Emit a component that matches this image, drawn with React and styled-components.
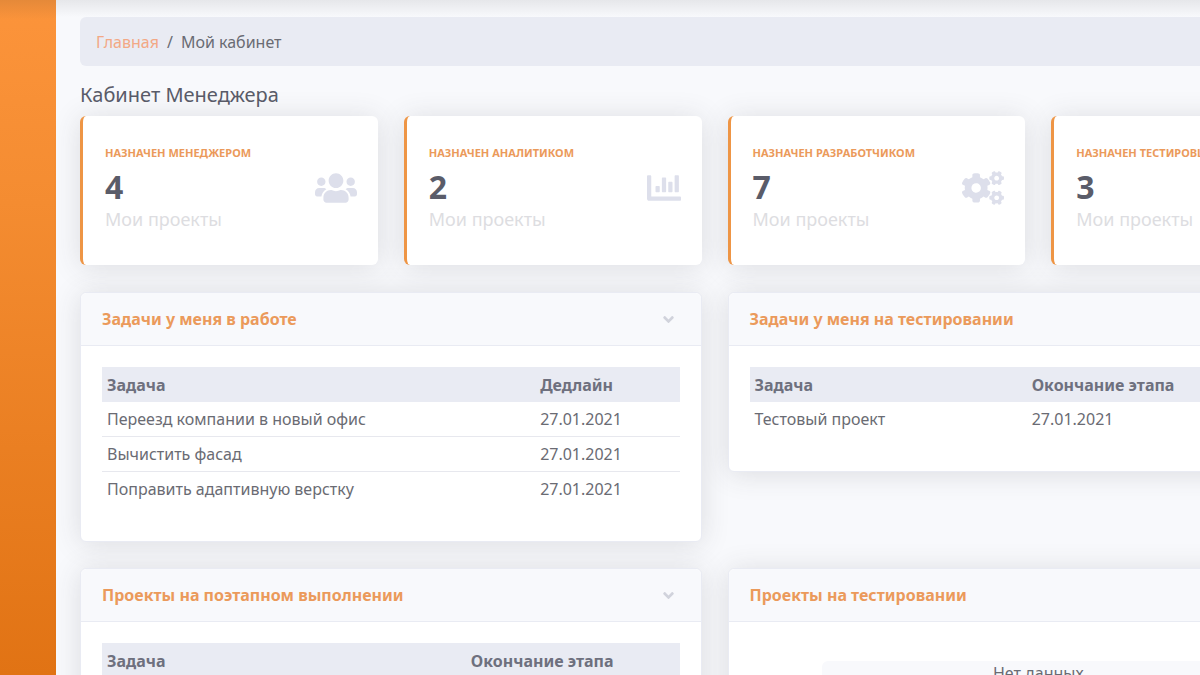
import styled, { createGlobalStyle } from "styled-components";
import {
  FaAngleDown,
  FaChartBar,
  FaCogs,
  FaUsers,
  FaVial,
} from "react-icons/fa";

const GlobalStyle = createGlobalStyle`
  * {
    box-sizing: border-box;
  }

  body {
    margin: 0;
    font-family: "Noto Sans", "Open Sans", sans-serif;
    font-size: 16px;
    line-height: 24px;
    color: #6a6b73;
    background: #f8f9fc;
  }
`;

const Shell = styled.div`
  display: flex;
  height: 100vh;
  overflow: hidden;
`;

const Sidebar = styled.aside`
  flex: 0 0 56px;
  background: linear-gradient(#e58939 0, rgba(253, 147, 58, 0) 20px),
    linear-gradient(#fc943b 0%, #f48c31 30%, #e17314 100%);
`;

const Main = styled.main`
  flex: 1 0 1317px;
  min-width: 0;
  padding: 17px 24px 0;
  background: linear-gradient(#e6e7ea, #f8f9fc 17px);
`;

const Breadcrumb = styled.nav`
  display: flex;
  gap: 8px;
  padding: 13px 16px 12px;
  border-radius: 6px;
  background: #e9ebf3;
`;

const HomeLink = styled.a`
  color: #f3a885;
  text-decoration: none;
`;

const Title = styled.h1`
  margin: 17px 0 9px;
  font-size: 20px;
  font-weight: 400;
  line-height: 24px;
  color: #5a5c69;
`;

const StatRow = styled.section`
  display: grid;
  grid-template-columns: repeat(4, minmax(0, 1fr));
  gap: 26px;
  margin-bottom: 27px;
`;

const StatCard = styled.article`
  display: flex;
  align-items: center;
  justify-content: space-between;
  padding: 25px 21px 36px 22px;
  border-left: 3px solid #ee9545;
  border-radius: 6px;
  background: #fff;
  box-shadow: 0 2px 28px rgba(58, 59, 69, 0.15);
`;

const StatIcon = styled.div`
  padding-top: 6px;
  color: #dddfeb;

  svg {
    display: block;
    width: ${({ $wide }) => ($wide ? "42px" : "34px")};
    height: 34px;
  }
`;

const StatLabel = styled.h2`
  margin: 0;
  font-size: 11px;
  font-weight: 700;
  line-height: 24px;
  color: #eb9a5b;
  text-transform: uppercase;
  white-space: nowrap;
`;

const StatValue = styled.div`
  font-size: 32px;
  font-weight: 700;
  line-height: 44px;
  color: #5a5c69;
`;

const StatLink = styled.a`
  display: block;
  font-size: 18px;
  line-height: 20px;
  color: #dddde1;
  text-decoration: none;
`;

const PanelGrid = styled.section`
  display: grid;
  grid-template-columns: repeat(2, minmax(0, 1fr));
  align-items: start;
  gap: 26px;
`;

const Panel = styled.article`
  border: 1px solid #e9ebf3;
  border-radius: 6px;
  background: #fff;
  box-shadow: 0 2px 28px rgba(58, 59, 69, 0.15);
`;

const PanelHeader = styled.header`
  display: flex;
  align-items: center;
  justify-content: space-between;
  padding: 14px 21px;
  border-bottom: 1px solid #e9ebf3;
  border-radius: 6px 6px 0 0;
  background: #f8f9fc;
`;

const PanelTitle = styled.h2`
  margin: 0;
  font-size: 16px;
  font-weight: 700;
  line-height: 24px;
  color: #eb9a5b;
`;

const MenuButton = styled.button`
  display: flex;
  padding: 3px;
  border: 0;
  background: none;
  font-size: 17px;
  color: #d1d3dc;
`;

const PanelBody = styled.div`
  padding: 21px 21px 19px;
`;

const Table = styled.table`
  width: 100%;
  margin-bottom: 16px;
  border-spacing: 0;
  table-layout: fixed;

  th,
  td {
    padding: 5px;
    text-align: left;
    white-space: nowrap;
  }

  th {
    height: 35px;
    font-weight: 700;
    color: #6e707e;
    background: #e9ebf3;
  }

  th:first-child {
    width: ${({ $first }) => $first};
  }

  tbody tr + tr td {
    border-top: 1px solid #e7e8ee;
  }
`;

const Empty = styled.p`
  width: 75%;
  margin: 18px auto 16px;
  border-radius: 6px;
  background: #f8f9fc;
  text-align: center;
`;

const stats = [
  { label: "Назначен менеджером", value: 4, Icon: FaUsers, wide: true },
  { label: "Назначен аналитиком", value: 2, Icon: FaChartBar },
  { label: "Назначен разработчиком", value: 7, Icon: FaCogs, wide: true },
  { label: "Назначен тестировщиком", value: 3, Icon: FaVial },
];

const panels = [
  {
    title: "Задачи у меня в работе",
    column: "Дедлайн",
    first: "75%",
    rows: [
      ["Переезд компании в новый офис", "27.01.2021"],
      ["Вычистить фасад", "27.01.2021"],
      ["Поправить адаптивную верстку", "27.01.2021"],
    ],
  },
  {
    title: "Задачи у меня на тестировании",
    column: "Окончание этапа",
    first: "48%",
    rows: [["Тестовый проект", "27.01.2021"]],
  },
  {
    title: "Проекты на поэтапном выполнении",
    column: "Окончание этапа",
    first: "63%",
    rows: [],
  },
  { title: "Проекты на тестировании" },
];

function TaskTable({ column, first, rows }) {
  return (
    <Table $first={first}>
      <thead>
        <tr>
          <th>Задача</th>
          <th>{column}</th>
        </tr>
      </thead>
      <tbody>
        {rows.map(([name, date]) => (
          <tr key={name}>
            <td>{name}</td>
            <td>{date}</td>
          </tr>
        ))}
      </tbody>
    </Table>
  );
}

function App() {
  return (
    <>
      <GlobalStyle />
      <Shell>
        <Sidebar />
        <Main>
          <Breadcrumb>
            <HomeLink href="#">Главная</HomeLink>
            <span>/</span>
            <span>Мой кабинет</span>
          </Breadcrumb>
          <Title>Кабинет Менеджера</Title>
          <StatRow>
            {stats.map(({ label, value, Icon, wide }) => (
              <StatCard key={label}>
                <div>
                  <StatLabel>{label}</StatLabel>
                  <StatValue>{value}</StatValue>
                  <StatLink href="#">Мои проекты</StatLink>
                </div>
                <StatIcon $wide={wide}>
                  <Icon />
                </StatIcon>
              </StatCard>
            ))}
          </StatRow>
          <PanelGrid>
            {panels.map((panel) => (
              <Panel key={panel.title}>
                <PanelHeader>
                  <PanelTitle>{panel.title}</PanelTitle>
                  <MenuButton type="button" aria-label={panel.title}>
                    <FaAngleDown />
                  </MenuButton>
                </PanelHeader>
                <PanelBody>
                  {panel.rows ? (
                    <TaskTable {...panel} />
                  ) : (
                    <Empty>Нет данных</Empty>
                  )}
                </PanelBody>
              </Panel>
            ))}
          </PanelGrid>
        </Main>
      </Shell>
    </>
  );
}

export default App;
